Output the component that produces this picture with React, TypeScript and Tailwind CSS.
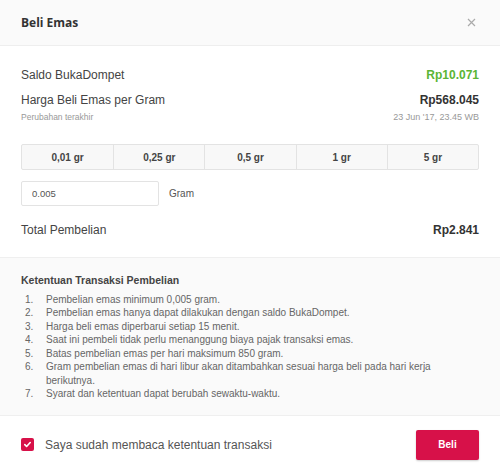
import React, { useState } from 'react';

const grams = ['0,01 gr', '0,25 gr', '0,5 gr', '1 gr', '5 gr'];

const rules = [
  'Pembelian emas minimum 0,005 gram.',
  'Pembelian emas hanya dapat dilakukan dengan saldo BukaDompet.',
  'Harga beli emas diperbarui setiap 15 menit.',
  'Saat ini pembeli tidak perlu menanggung biaya pajak transaksi emas.',
  'Batas pembelian emas per hari maksimum 850 gram.',
  'Gram pembelian emas di hari libur akan ditambahkan sesuai harga beli pada hari kerja berikutnya.',
  'Syarat dan ketentuan dapat berubah sewaktu-waktu.',
];

export default function App() {
  const [amount, setAmount] = useState('0.005');
  const [agreed, setAgreed] = useState(true);

  return (
    <div className="w-[500px] h-[474px] bg-white text-[#444] font-['Liberation_Sans',Arial,sans-serif] flex flex-col">
      {/* Header */}
      <div className="h-[46px] shrink-0 flex items-center justify-between px-[21px] bg-[#fafafa] border-b border-[#eeeeee]">
        <span className="text-[12px] font-bold text-[#333] font-['Open_Sans','Liberation_Sans',sans-serif]">Beli Emas</span>
        <button className="w-4 h-4 flex items-center justify-center text-[#aaa]">
          <svg width="9" height="9" viewBox="0 0 9 9" fill="none" stroke="currentColor" strokeWidth="1.2">
            <path d="M1 1l7 7M8 1l-7 7" />
          </svg>
        </button>
      </div>

      {/* Body */}
      <div className="px-[21px] pt-[22px] pb-[20px]">
        <div className="flex items-center justify-between h-[14px]">
          <span className="text-[12px]">Saldo BukaDompet</span>
          <span className="text-[12px] font-bold text-[#5bb534]">Rp10.071</span>
        </div>
        <div className="flex items-center justify-between h-[14px] mt-[11px]">
          <span className="text-[12px]">Harga Beli Emas per Gram</span>
          <span className="text-[12px] font-bold text-[#333]">Rp568.045</span>
        </div>
        <div className="flex items-center justify-between mt-[5px] h-[11px]">
          <span className="text-[8.5px] text-[#999]">Perubahan terakhir</span>
          <span className="text-[9px] text-[#999]">23 Jun '17, 23.45 WB</span>
        </div>

        <div className="grid grid-cols-5 mt-[21px] border border-[#e3e3e3] rounded-[2px] bg-[#f8f8f8]">
          {grams.map((g, i) => (
            <button
              key={g}
              className={`h-[24px] text-[10px] font-bold text-[#444] flex items-center justify-center ${i > 0 ? 'border-l border-[#e3e3e3]' : ''}`}
            >
              {g}
            </button>
          ))}
        </div>

        <div className="flex items-center gap-[10px] mt-[11px]">
          <input
            value={amount}
            onChange={(e) => setAmount(e.target.value)}
            className="w-[138px] h-[25px] border border-[#e3e3e3] rounded-[2px] px-[10px] text-[9.5px] text-[#555] outline-none"
          />
          <span className="text-[10px] text-[#555]">Gram</span>
        </div>

        <div className="flex items-center justify-between mt-[17px] h-[14px]">
          <span className="text-[12px]">Total Pembelian</span>
          <span className="text-[12px] font-bold text-[#333]">Rp2.841</span>
        </div>
      </div>

      {/* Terms */}
      <div className="bg-[#fafafa] border-t border-b border-[#efefef] px-[21px] pt-[15px] pb-[14px]">
        <div className="text-[10.5px] font-bold text-[#444]">Ketentuan Transaksi Pembelian</div>
        <ol className="mt-[4px] text-[10px] leading-[13.5px] text-[#666]">
          {rules.map((r, i) => (
            <li key={i} className="flex">
              <span className="w-[25px] shrink-0 pl-[4px]">{i + 1}.</span>
              <span className="pr-[10px]">{r}</span>
            </li>
          ))}
        </ol>
      </div>

      {/* Footer */}
      <div className="flex-1 flex items-center justify-between px-[21px]">
        <label className="flex items-center gap-[11px] cursor-pointer" onClick={() => setAgreed(!agreed)}>
          <span className={`w-[13px] h-[13px] rounded-[2px] flex items-center justify-center ${agreed ? 'bg-[#d71149]' : 'border border-[#ccc] bg-white'}`}>
            {agreed && (
              <svg width="9" height="9" viewBox="0 0 10 10" fill="none" stroke="white" strokeWidth="1.8" strokeLinecap="round" strokeLinejoin="round">
                <path d="M2 5.2l2 2 4-4.4" />
              </svg>
            )}
          </span>
          <span className="text-[12px] text-[#555]">Saya sudah membaca ketentuan transaksi</span>
        </label>
        <button className="w-[63px] h-[30px] rounded-[2px] bg-[#d71149] text-white text-[10px] font-bold shadow-[0_1px_2px_rgba(0,0,0,0.2)]">
          Beli
        </button>
      </div>
    </div>
  );
}
